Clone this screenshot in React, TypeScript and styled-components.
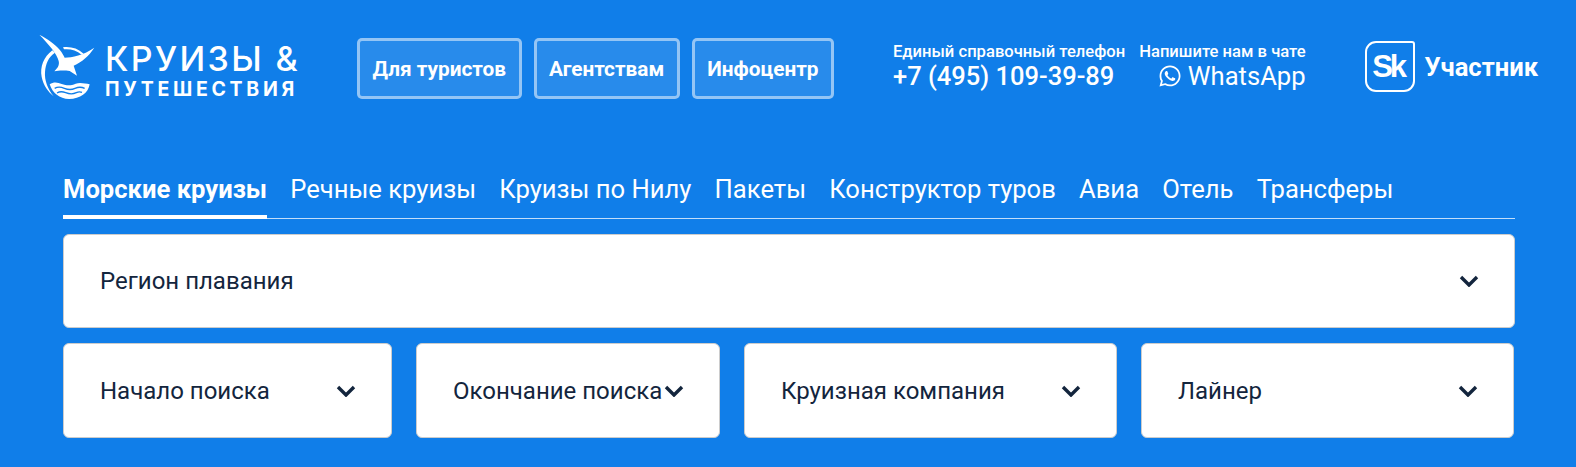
import { FaWhatsapp } from "react-icons/fa";
import styled, { createGlobalStyle } from "styled-components";

const GlobalStyle = createGlobalStyle`
  html, body {
    margin: 0;
    padding: 0;
    background: #107ee9;
    font-family: Roboto, "Liberation Sans", sans-serif;
  }
  * { box-sizing: border-box; }
`;

const Page = styled.div`
  width: 1576px;
  height: 467px;
  overflow: hidden;
  background: #107ee9;
  color: #fff;
`;

const Header = styled.header`
  display: flex;
  align-items: flex-start;
  height: 136px;
  padding: 38px 0 0 37px;
`;

const Logo = styled.a`
  display: flex;
  width: 320px;
  height: 69px;
  margin-top: -6px;
  gap: 8px;
`;

const LogoText = styled.div`
  display: flex;
  flex-direction: column;
  padding-top: 7px;
  font-family: Inter, sans-serif;
`;

const LogoTop = styled.span`
  font-size: 34px;
  line-height: 40px;
  font-weight: 500;
  letter-spacing: 2.4px;
  white-space: nowrap;
`;

const LogoBottom = styled.span`
  font-size: 19.5px;
  line-height: 20px;
  font-weight: 700;
  letter-spacing: 3.7px;
  white-space: nowrap;
`;

const NavButtons = styled.nav`
  display: flex;
  gap: 12px;
  width: 536px;
`;

const NavButton = styled.a`
  display: flex;
  align-items: center;
  justify-content: center;
  height: 61px;
  padding: 0 12.5px;
  border: 3px solid rgba(255, 255, 255, 0.5);
  border-radius: 5px;
  background: rgba(255, 255, 255, 0.1);
  font-size: 20.8px;
  font-weight: 700;
`;

const Contacts = styled.div`
  display: flex;
  gap: 14px;
  margin-top: 5px;
`;

const Contact = styled.div<{ $end?: boolean }>`
  display: flex;
  flex-direction: column;
  align-items: ${(props) => (props.$end ? "flex-end" : "flex-start")};
`;

const ContactLabel = styled.span`
  font-size: 16.6px;
  line-height: 18px;
  font-weight: 500;
  white-space: nowrap;
`;

const ContactValue = styled.span`
  display: flex;
  align-items: center;
  gap: 6px;
  font-size: 25.5px;
  line-height: 30px;
  font-weight: 500;
  white-space: nowrap;
`;

const WhatsApp = styled(ContactValue)`
  font-size: 25.6px;
  font-weight: 400;
`;

const Member = styled.div`
  display: flex;
  align-items: center;
  gap: 10px;
  margin: 3px 0 0 59px;
`;

const SkBadge = styled.div`
  display: flex;
  align-items: center;
  justify-content: center;
  width: 50px;
  height: 51px;
  padding-right: 3px;
  border: 2px solid #fff;
  border-radius: 11px 3px 11px 11px;
  font-family: "Liberation Sans", sans-serif;
  font-size: 31px;
  font-weight: 700;
  letter-spacing: -3px;
`;

const MemberLabel = styled.span`
  font-size: 25.6px;
  font-weight: 700;
`;

const Search = styled.section`
  width: 1452px;
  margin-left: 63px;
`;

const Tabs = styled.div`
  display: flex;
  gap: 23.2px;
  height: 83px;
  padding-top: 36px;
  border-bottom: 1px solid rgba(255, 255, 255, 0.75);
`;

const Tab = styled.a<{ $active?: boolean }>`
  height: 47px;
  font-size: 25.6px;
  line-height: 34px;
  font-weight: ${(props) => (props.$active ? 700 : 400)};
  border-bottom: ${(props) => (props.$active ? "4px solid #fff" : "0")};
`;

const Rows = styled.div`
  display: flex;
  flex-direction: column;
  gap: 15px;
  margin-top: 15px;
`;

const Row = styled.div<{ $inset?: boolean }>`
  display: flex;
  gap: 24px;
  height: ${(props) => (props.$inset ? "95px" : "94px")};
  padding-right: ${(props) => (props.$inset ? "1px" : "0")};
`;

const Field = styled.div<{ $width?: number }>`
  display: flex;
  align-items: center;
  justify-content: space-between;
  flex: ${(props) => (props.$width ? `0 0 ${props.$width}px` : "1")};
  padding: 0 34px 0 36px;
  background: #fff;
  border: 1px solid #ccc;
  border-radius: 6px;
  color: #13253d;
  font-size: 24px;
  white-space: nowrap;
`;

const ChevronIcon = styled.svg`
  flex: none;
  width: 20px;
  height: 12px;
  margin-right: 1px;
`;

function Chevron() {
  return (
    <ChevronIcon viewBox="0 0 20 12" fill="none">
      <path d="M2 2l8 8 8-8" stroke="#13253d" strokeWidth="3.4" />
    </ChevronIcon>
  );
}

function Gull() {
  return (
    <svg width="60" height="68.3" viewBox="50 35 180 205" fill="#fff">
      <path d="M57 43 C80 55 105 72 118 88 C126 98 130 106 133 112 C155 112 190 104 222 82 C205 108 185 125 160 136 L170 166 L148 152 C133 150 115 150 102 153 C112 143 118 134 115 122 C110 100 85 72 57 43Z" />
      <path d="M96 90 C70 110 58 140 64 170 C69 195 84 215 100 228 C82 205 72 180 74 155 C76 130 84 110 104 97Z" />
      <path d="M128 81 C150 78 172 84 190 100 L184 103 C168 90 150 85 131 87Z" />
      <path d="M88 192 C100 184 112 186 124 191 C140 196 152 196 166 190 C180 186 195 190 208 192 C204 218 180 236 146 236 C118 236 96 218 88 192Z" />
      <path d="M103 204 C114 198 122 200 132 204 C144 209 154 209 164 204 C174 200 184 200 193 204 M110 218 C120 212 128 214 136 217 C148 222 158 222 168 217 C174 214 180 214 185 216" fill="none" stroke="#107ee9" strokeWidth="4" />
    </svg>
  );
}

const tabs = ["Речные круизы", "Круизы по Нилу", "Пакеты", "Конструктор туров", "Авиа", "Отель", "Трансферы"];

export default function App() {
  return (
    <Page>
      <GlobalStyle />
      <Header>
        <Logo>
          <Gull />
          <LogoText>
            <LogoTop>КРУИЗЫ &amp;</LogoTop>
            <LogoBottom>ПУТЕШЕСТВИЯ</LogoBottom>
          </LogoText>
        </Logo>
        <NavButtons>
          <NavButton>Для туристов</NavButton>
          <NavButton>Агентствам</NavButton>
          <NavButton>Инфоцентр</NavButton>
        </NavButtons>
        <Contacts>
          <Contact>
            <ContactLabel>Единый справочный телефон</ContactLabel>
            <ContactValue>+7 (495) 109-39-89</ContactValue>
          </Contact>
          <Contact $end>
            <ContactLabel>Напишите нам в чате</ContactLabel>
            <WhatsApp>
              <FaWhatsapp size={24} />
              WhatsApp
            </WhatsApp>
          </Contact>
        </Contacts>
        <Member>
          <SkBadge>Sk</SkBadge>
          <MemberLabel>Участник</MemberLabel>
        </Member>
      </Header>
      <Search>
        <Tabs>
          <Tab $active>Морские круизы</Tab>
          {tabs.map((tab) => (
            <Tab key={tab}>{tab}</Tab>
          ))}
        </Tabs>
        <Rows>
          <Row>
            <Field>
              Регион плавания
              <Chevron />
            </Field>
          </Row>
          <Row $inset>
            <Field $width={329}>
              Начало поиска
              <Chevron />
            </Field>
            <Field $width={304}>
              Окончание поиска
              <Chevron />
            </Field>
            <Field $width={373}>
              Круизная компания
              <Chevron />
            </Field>
            <Field>
              Лайнер
              <Chevron />
            </Field>
          </Row>
        </Rows>
      </Search>
    </Page>
  );
}
